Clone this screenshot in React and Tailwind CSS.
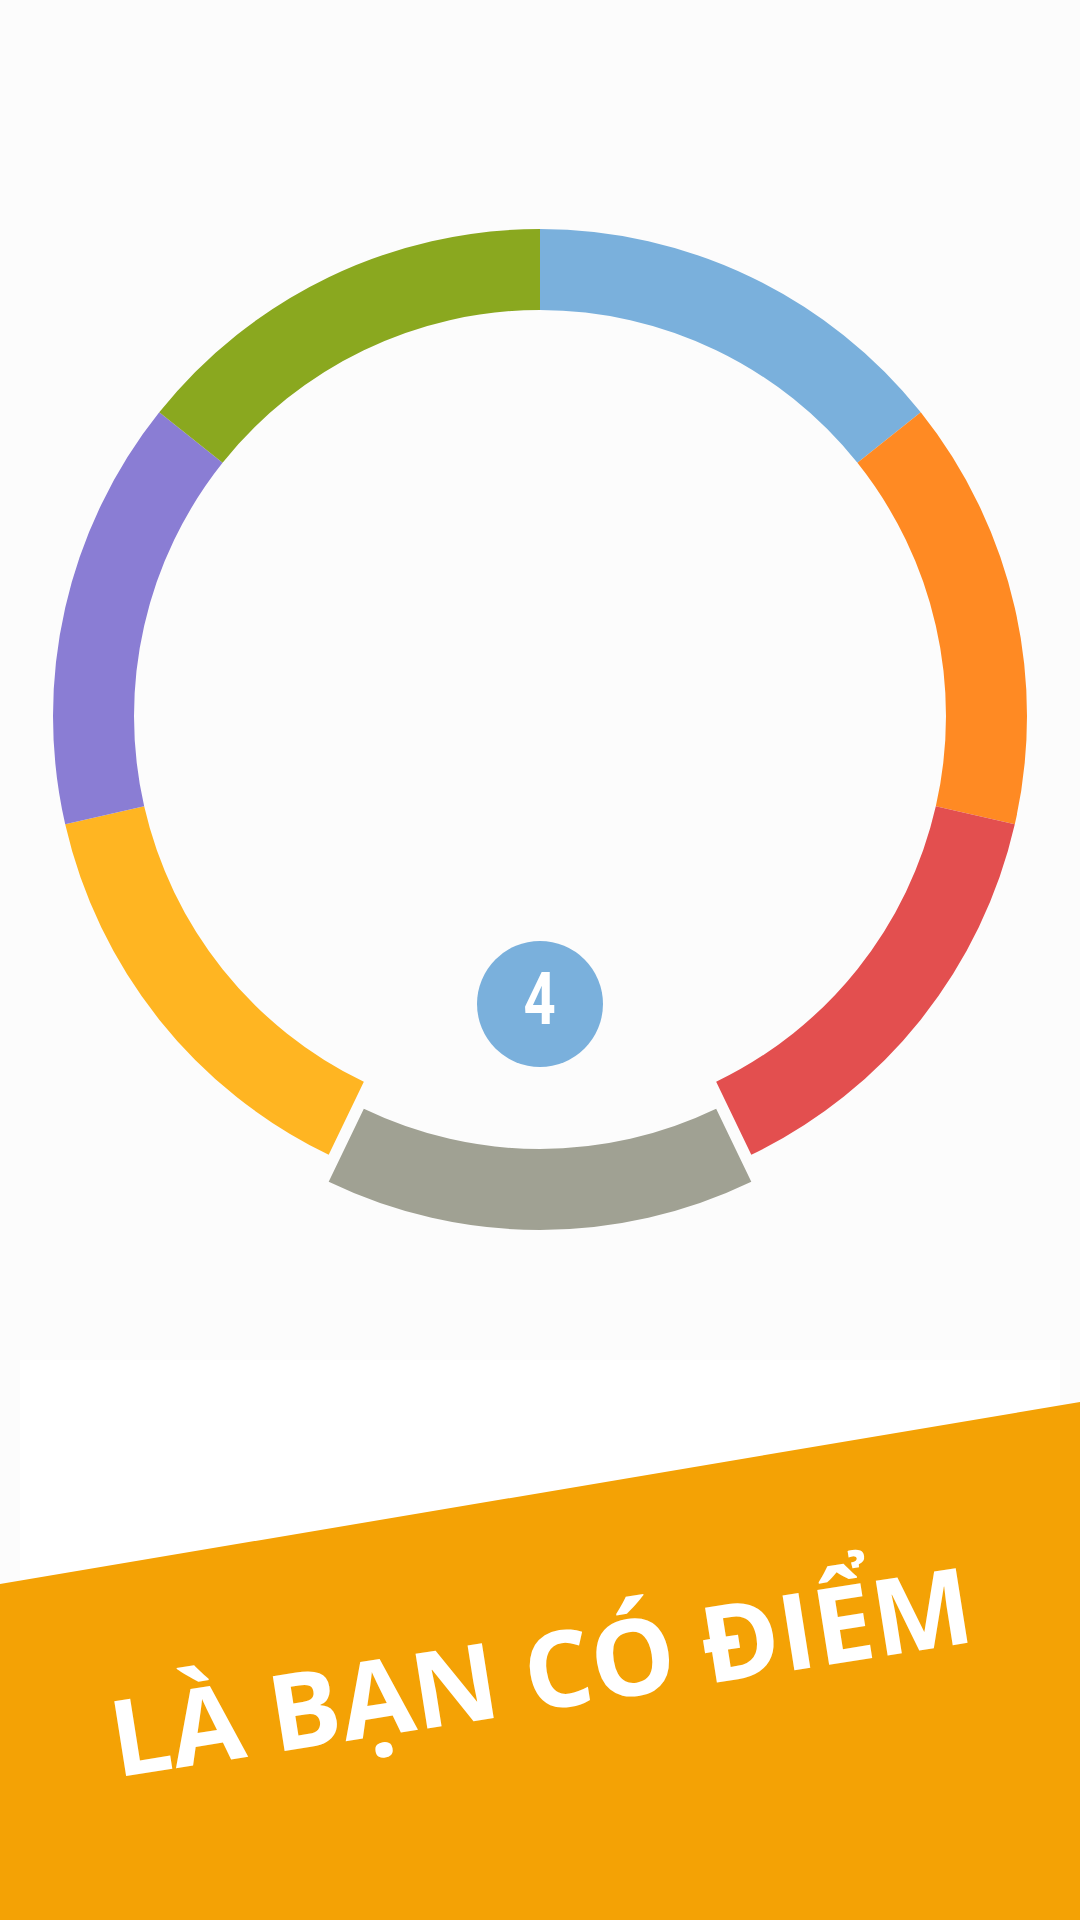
import React from "react";

const CX = 540;
const CY = 716;
const RO = 487;
const RI = 406;

function pt(r, deg) {
  const a = (deg * Math.PI) / 180;
  return [CX + r * Math.sin(a), CY - r * Math.cos(a)];
}

function arcPath(a0, a1) {
  const [x0, y0] = pt(RO, a0);
  const [x1, y1] = pt(RO, a1);
  const [x2, y2] = pt(RI, a1);
  const [x3, y3] = pt(RI, a0);
  return `M${x0} ${y0} A${RO} ${RO} 0 0 1 ${x1} ${y1} L${x2} ${y2} A${RI} ${RI} 0 0 0 ${x3} ${y3} Z`;
}

const STEP = 360 / 7;
const SEGMENTS = [
  { color: "#7ab0dc", dy: 0 },
  { color: "#ff8a23", dy: 0 },
  { color: "#e34f4f", dy: 0 },
  { color: "#a0a193", dy: 27 },
  { color: "#ffb522", dy: 0 },
  { color: "#8a7dd4", dy: 0 },
  { color: "#8aa81f", dy: 0 },
];

export default function App() {
  return (
    <div className="w-[1080px] h-[1920px] bg-[#fcfcfc] flex flex-col overflow-hidden">
      <div className="relative h-[1360px] shrink-0">
        <svg width="1080" height="1360" viewBox="0 0 1080 1360" className="block">
          {SEGMENTS.map((s, i) => (
            <path
              key={i}
              d={arcPath(i * STEP, (i + 1) * STEP)}
              fill={s.color}
              transform={`translate(0 ${s.dy})`}
            />
          ))}
        </svg>
        <div className="absolute left-[477px] top-[941px] w-[126px] h-[126px] rounded-full bg-[#7ab0dc] flex items-center justify-center">
          <span className="text-white font-bold text-[72px] leading-none scale-x-[0.78] -translate-y-[4px] font-['Roboto',sans-serif]">
            4
          </span>
        </div>
      </div>
      <div className="relative flex-1">
        <div className="mx-[20px] h-full bg-white"></div>
        <div className="absolute inset-0 bg-[#f4a205] [clip-path:polygon(0_224px,100%_42px,100%_100%,0_100%)]"></div>
        <div className="absolute inset-0 flex items-center justify-center pt-[58px]">
          <div className="-rotate-[9deg] text-white text-[106px] leading-none font-bold whitespace-nowrap font-['Open_Sans',sans-serif]">
            LÀ BẠN CÓ ĐIỂM
          </div>
        </div>
      </div>
    </div>
  );
}
